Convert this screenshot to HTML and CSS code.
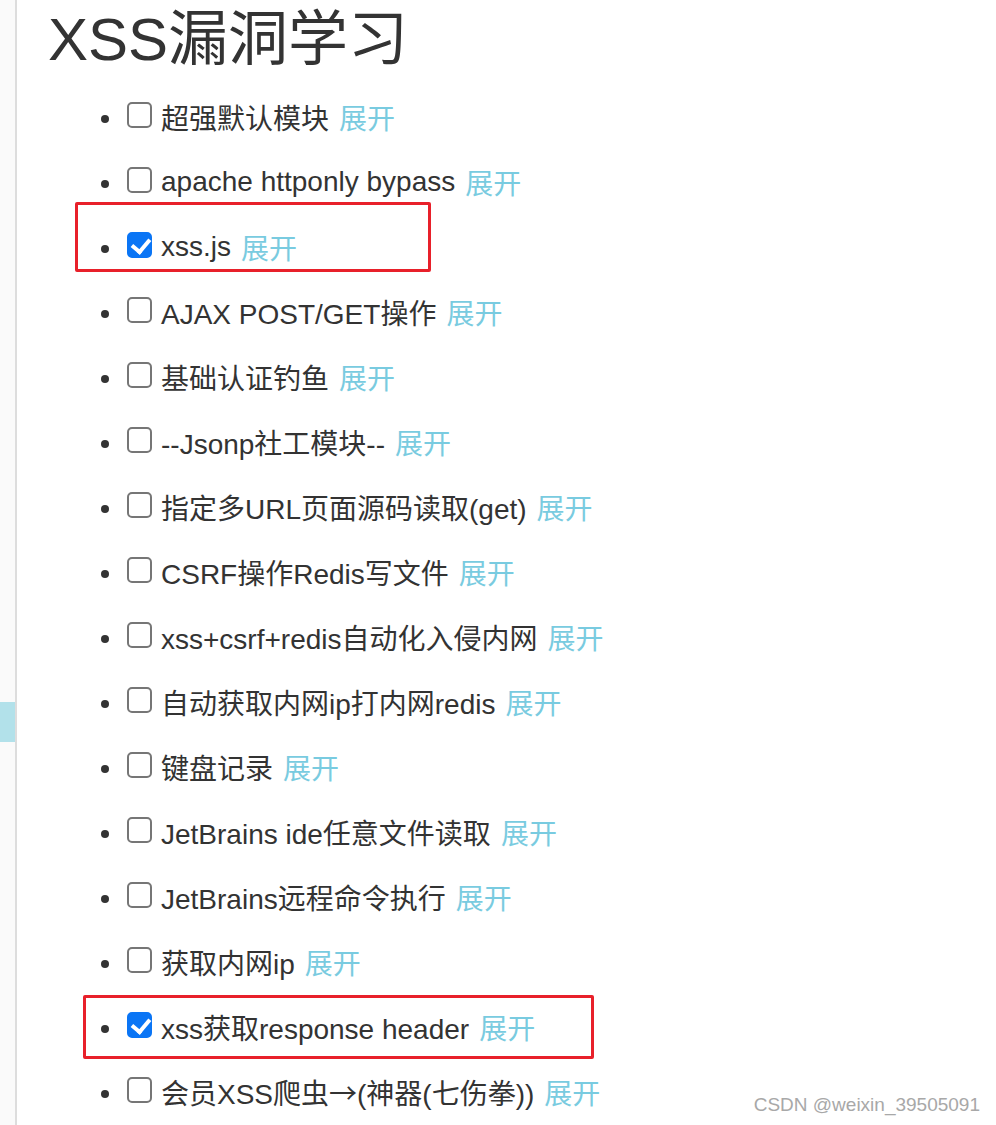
FILE: index.html
```html
<!DOCTYPE html>
<html lang="zh-CN">
<head>
  <meta charset="UTF-8" />
  <meta name="viewport" content="width=device-width, initial-scale=1" />
  <title>XSS漏洞学习</title>
  <link rel="stylesheet" href="styles.css">
</head>
<body>
  <!-- Barra lateral izquierda -->
  <aside class="rail">
    <div class="rail-tab"></div>
  </aside>

  <main class="content">
    <h1 class="title">XSS漏洞学习</h1>

    <ul class="modules">
      <li><input type="checkbox" /><span>超强默认模块</span><a href="#" class="more">展开</a></li>
      <li><input type="checkbox" /><span>apache httponly bypass</span><a href="#" class="more">展开</a></li>
      <li><input type="checkbox" checked /><span>xss.js</span><a href="#" class="more">展开</a></li>
      <li><input type="checkbox" /><span>AJAX POST/GET操作</span><a href="#" class="more">展开</a></li>
      <li><input type="checkbox" /><span>基础认证钓鱼</span><a href="#" class="more">展开</a></li>
      <li><input type="checkbox" /><span>--Jsonp社工模块--</span><a href="#" class="more">展开</a></li>
      <li><input type="checkbox" /><span>指定多URL页面源码读取(get)</span><a href="#" class="more">展开</a></li>
      <li><input type="checkbox" /><span>CSRF操作Redis写文件</span><a href="#" class="more">展开</a></li>
      <li><input type="checkbox" /><span>xss+csrf+redis自动化入侵内网</span><a href="#" class="more">展开</a></li>
      <li><input type="checkbox" /><span>自动获取内网ip打内网redis</span><a href="#" class="more">展开</a></li>
      <li><input type="checkbox" /><span>键盘记录</span><a href="#" class="more">展开</a></li>
      <li><input type="checkbox" /><span>JetBrains ide任意文件读取</span><a href="#" class="more">展开</a></li>
      <li><input type="checkbox" /><span>JetBrains远程命令执行</span><a href="#" class="more">展开</a></li>
      <li><input type="checkbox" /><span>获取内网ip</span><a href="#" class="more">展开</a></li>
      <li><input type="checkbox" checked /><span>xss获取response header</span><a href="#" class="more">展开</a></li>
      <li><input type="checkbox" /><span>会员XSS爬虫<span class="arrow">→</span>(神器(七伤拳))</span><a href="#" class="more">展开</a></li>
    </ul>
  </main>

  <!-- Recuadros rojos de anotación -->
  <div class="mark mark-one"></div>
  <div class="mark mark-two"></div>

  <div class="watermark">CSDN @weixin_39505091</div>
</body>
</html>
```

FILE: styles.css
```css
* {
  box-sizing: border-box;
}

html, body {
  margin: 0;
  padding: 0;
  height: 100%;
  background: #ffffff;
  color: #333333;
  font-family: "Liberation Sans", "Noto Sans CJK SC", sans-serif;
}

body {
  display: flex;
  position: relative;
  min-height: 1125px;
  overflow: hidden;
}

/* Barra lateral */
.rail {
  width: 17px;
  flex-shrink: 0;
  background: #fafafa;
  border-right: 2px solid #dddddd;
}

.rail-tab {
  margin-top: 702px;
  height: 40px;
  background: #b2e1ea;
}

/* Contenido */
.content {
  flex: 1;
  padding-left: 31px;
}

.title {
  margin: 0;
  padding-top: 5px;
  font-size: 60px;
  font-weight: 400;
  line-height: 70px;
  color: #333333;
}

.modules {
  list-style: none;
  margin: 9px 0 0;
  padding: 0;
}

.modules li {
  display: flex;
  align-items: center;
  height: 65px;
  padding-left: 53px;
  font-size: 28px;
  white-space: pre;
}

/* Viñeta */
.modules li::before {
  content: "";
  width: 8px;
  height: 8px;
  border-radius: 50%;
  background: #333333;
  margin: 4px 18px 0 0;
  flex-shrink: 0;
}

/* Casilla de verificación */
.modules input {
  appearance: none;
  -webkit-appearance: none;
  position: relative;
  width: 25px;
  height: 26px;
  margin: -4px 9px 0 0;
  flex-shrink: 0;
  border: 2px solid #767676;
  border-radius: 5px;
  background: #ffffff;
}

.modules input:checked {
  background: #0a75f5;
  border-color: #0a75f5;
}

.modules input:checked::after {
  content: "";
  position: absolute;
  left: 6px;
  top: 1px;
  width: 8px;
  height: 14px;
  border-right: 4.5px solid #ffffff;
  border-bottom: 4.5px solid #ffffff;
  transform: rotate(40deg);
}

.arrow {
  font-family: "Noto Sans CJK SC", sans-serif;
}

.more {
  margin-left: 10px;
  color: #79cbe0;
  text-decoration: none;
}

/* Anotaciones */
.mark {
  position: absolute;
  border: 3px solid #e8202a;
  border-radius: 2px;
}

.mark-one {
  left: 75px;
  top: 202px;
  width: 356px;
  height: 70px;
}

.mark-two {
  left: 83px;
  top: 995px;
  width: 511px;
  height: 64px;
}

.watermark {
  position: absolute;
  right: 16px;
  top: 1094px;
  font-size: 19px;
  color: #a8a8a8;
  text-shadow: 0 0 1px #ffffff;
}
```
